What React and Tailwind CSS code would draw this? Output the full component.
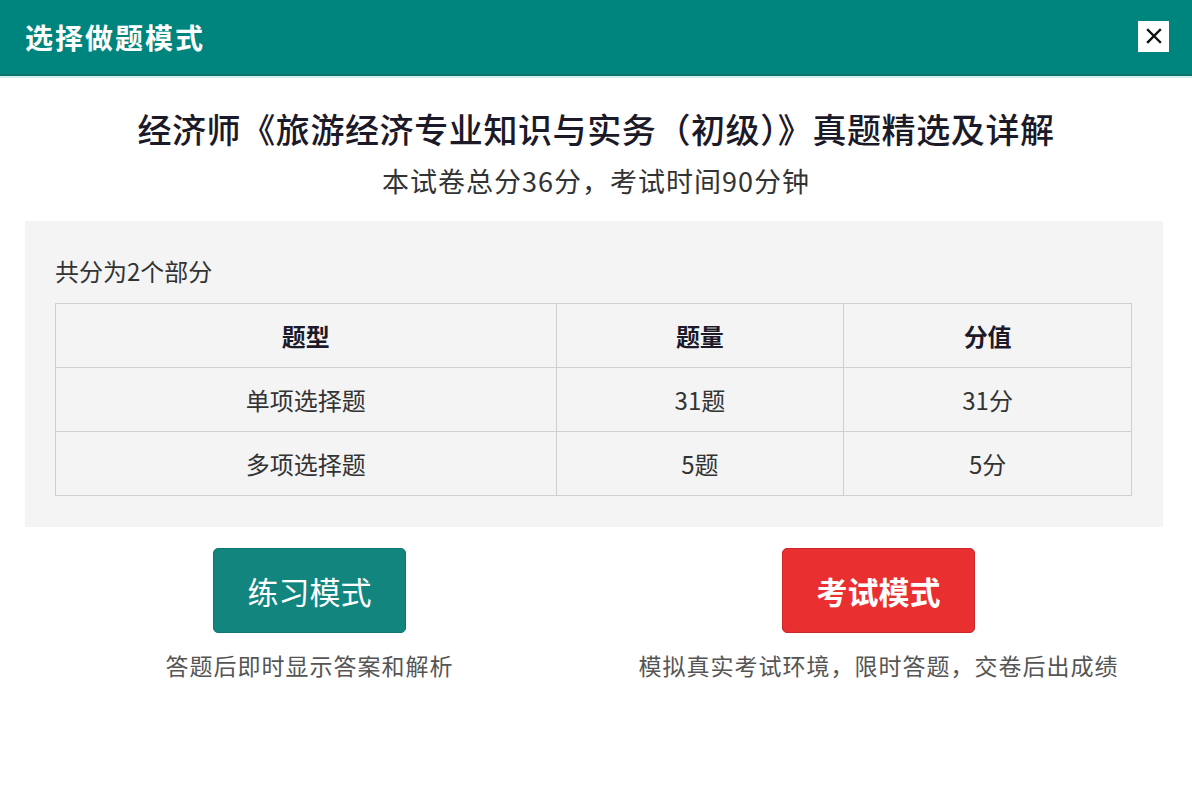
import React from "react";

const font = { fontFamily: '"Noto Sans CJK SC", "Noto Sans", sans-serif' };

export default function App() {
  const rows = [
    ["单项选择题", "31题", "31分"],
    ["多项选择题", "5题", "5分"],
  ];
  return (
    <div className="w-[1192px] h-[798px] bg-white overflow-hidden" style={font}>
      <div className="h-[76px] bg-[#00857e] border-b-2 border-[#0b716b] flex items-center justify-between pl-[25px] pr-[23px]">
        <div className="text-white text-[28px] font-bold tracking-[2px] leading-none">选择做题模式</div>
        <button className="w-[31px] h-[31px] bg-white flex items-center justify-center mb-[2px]">
          <svg width="18" height="18" viewBox="0 0 18 18">
            <path d="M3 3 L15 15 M15 3 L3 15" stroke="#111" strokeWidth="2.4" strokeLinecap="square" />
          </svg>
        </button>
      </div>
      <div className="h-[2px] bg-[#d3efee]" />

      <div className="flex flex-col items-center mt-[30px]">
        <div className="text-[34px] leading-[42px] text-[#1c1a28] tracking-[0.6px] font-medium">
          经济师《旅游经济专业知识与实务（初级）》真题精选及详解
        </div>
        <div className="text-[27px] leading-[34px] text-[#333] mt-[14px] tracking-[1px]">
          本试卷总分36分，考试时间90分钟
        </div>
      </div>

      <div className="ml-[25px] w-[1138px] mt-[23px] bg-[#f4f4f5] pt-[34px] pb-[31px] pl-[30px] pr-[31px]">
        <div className="text-[24px] leading-[32px] text-[#333]">共分为2个部分</div>
        <table className="mt-[16px] w-[1077px] border-collapse text-[24px] text-[#222]">
          <thead>
            <tr className="h-[64px]">
              <th className="w-[501px] border border-[#cfcfcf] font-bold text-[#1c1a2a]">题型</th>
              <th className="w-[288px] border border-[#cfcfcf] font-bold text-[#1c1a2a]">题量</th>
              <th className="w-[288px] border border-[#cfcfcf] font-bold text-[#1c1a2a]">分值</th>
            </tr>
          </thead>
          <tbody>
            {rows.map((r, i) => (
              <tr key={i} className="h-[64px]">
                {r.map((c, j) => (
                  <td key={j} className="border border-[#cfcfcf] text-center text-[#333]">{c}</td>
                ))}
              </tr>
            ))}
          </tbody>
        </table>
      </div>

      <div className="ml-[25px] w-[1138px] mt-[21px] grid grid-cols-2">
        <div className="flex flex-col items-center">
          <button className="w-[193px] h-[85px] rounded-[5px] bg-[#13857f] border border-[#0f7671] text-white text-[31px] leading-none">
            练习模式
          </button>
          <div className="mt-[16px] text-[23px] leading-[32px] text-[#555] tracking-[1px]">答题后即时显示答案和解析</div>
        </div>
        <div className="flex flex-col items-center">
          <button className="w-[193px] h-[85px] rounded-[5px] bg-[#ea2f31] border border-[#c9282a] text-white text-[31px] font-bold leading-none">
            考试模式
          </button>
          <div className="mt-[16px] text-[23px] leading-[32px] text-[#555] tracking-[1px]">模拟真实考试环境，限时答题，交卷后出成绩</div>
        </div>
      </div>
    </div>
  );
}
